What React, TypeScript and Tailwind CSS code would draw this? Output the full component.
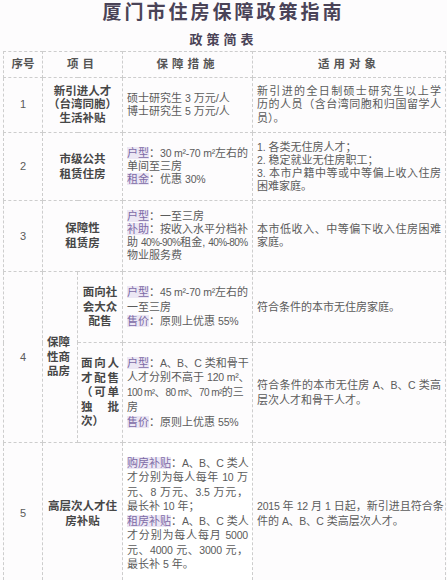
import React from "react";

const font = {
  fontFamily: '"Liberation Sans", "Noto Sans CJK SC", sans-serif',
};

function Tag({ children }: { children: React.ReactNode }) {
  return <span className="bg-[#ece7f4] text-[#7c6aa6]">{children}</span>;
}

// narrow latin / digits, as in the picture
function N({ children, tight }: { children: React.ReactNode; tight?: boolean }) {
  return (
    <span className={tight ? "text-[10px] tracking-[-0.6px]" : "text-[10.5px] tracking-[-0.2px]"}>
      {children}
    </span>
  );
}

// one line per entry; justified lines spread to full width
function Lines({ lines, justify = [], className = "" }: { lines: React.ReactNode[]; justify?: number[]; className?: string }) {
  return (
    <div className={className}>
      {lines.map((l, i) => (
        <div
          key={i}
          className={justify.includes(i) ? "[text-align-last:justify] whitespace-nowrap" : "whitespace-nowrap"}
        >
          {l}
        </div>
      ))}
    </div>
  );
}

const td = "border border-dashed border-[#cdcdcd] align-middle";
const head = "font-bold text-[11.5px] text-[#474747]";

export default function App() {
  return (
    <div className="w-[447px] h-[580px] overflow-hidden bg-[#fdfcfd] text-[#5b5b5b]" style={font}>
      <h1 className="pt-[2px] text-center text-[19px] leading-[22px] font-bold tracking-[3px] text-[#4a4357]">
        厦门市住房保障政策指南
      </h1>
      <h2 className="mt-[8px] text-center text-[13px] leading-[16px] font-bold tracking-[4px] text-[#4a4357]">
        政策简表
      </h2>
      <table className="mt-[3px] ml-[3px] w-[442px] table-fixed border-collapse text-[11px]">
        <colgroup>
          <col className="w-[39px]" />
          <col className="w-[35px]" />
          <col className="w-[45px]" />
          <col className="w-[130px]" />
          <col className="w-[193px]" />
        </colgroup>
        <tbody>
          <tr className="h-[26px] font-bold text-[11.5px] text-[#555]">
            <td className={td + " text-center"}>序号</td>
            <td colSpan={2} className={td + " text-center tracking-[4px]"}>项目</td>
            <td className={td + " text-center tracking-[4px]"}>保障措施</td>
            <td className={td + " text-center tracking-[4px]"}>适用对象</td>
          </tr>

          <tr className="h-[55px] leading-[13.5px]">
            <td className={td + " text-center"}>1</td>
            <td colSpan={2} className={td + " text-center " + head}>
              新引进人才<br />（台湾同胞）<br />生活补贴
            </td>
            <td className={td + " px-[4px]"}>
              <Lines lines={[<>硕士研究生 <N>3</N> 万元/人</>, <>博士研究生 <N>5</N> 万元/人</>]} />
            </td>
            <td className={td + " px-[4px]"}>
              <Lines
                lines={["新引进的全日制硕士研究生以上学", "历的人员（含台湾同胞和归国留学人", "员）。"]}
                justify={[0, 1]}
              />
            </td>
          </tr>

          <tr className="h-[68px] leading-[13px]">
            <td className={td + " text-center"}>2</td>
            <td colSpan={2} className={td + " text-center leading-[15px] " + head}>
              市级公共<br />租赁住房
            </td>
            <td className={td + " px-[4px]"}>
              <Lines
                lines={[
                  <><Tag>户型</Tag>：<N>30 m²-70 m²</N>左右的</>,
                  "单间至三房",
                  <><Tag>租金</Tag>：优惠 <N>30%</N></>,
                ]}
              />
            </td>
            <td className={td + " px-[4px]"}>
              <Lines
                lines={[<><N>1.</N> 各类无住房人才；</>, <><N>2.</N> 稳定就业无住房职工；</>, <><N>3.</N> 本市户籍中等或中等偏上收入住房</>, "困难家庭。"]}
                justify={[2]}
              />
            </td>
          </tr>

          <tr className="h-[71px] leading-[13px]">
            <td className={td + " text-center"}>3</td>
            <td colSpan={2} className={td + " text-center leading-[15px] " + head}>
              保障性<br />租赁房
            </td>
            <td className={td + " px-[4px]"}>
              <Lines
                lines={[
                  <><Tag>户型</Tag>：一至三房</>,
                  <><Tag>补助</Tag>：按收入水平分档补</>,
                  <>助 <N tight>40%-90%</N>租金, <N tight>40%-80%</N></>,
                  "物业服务费",
                ]}
                justify={[1]}
              />
            </td>
            <td className={td + " px-[4px]"}>
              <Lines lines={["本市低收入、中等偏下收入住房困难", "家庭。"]} justify={[0]} />
            </td>
          </tr>

          <tr className="h-[71px] leading-[14.5px]">
            <td rowSpan={2} className={td + " text-center"}>4</td>
            <td rowSpan={2} className={td + " pl-[4px] " + head}>
              保障<br />性商<br />品房
            </td>
            <td className={td + " px-[3px] text-center " + head}>
              面向社<br />会大众<br />配售
            </td>
            <td className={td + " px-[4px]"}>
              <Lines
                lines={[
                  <><Tag>户型</Tag>：<N>45 m²-70 m²</N>左右的</>,
                  "一至三房",
                  <><Tag>售价</Tag>：原则上优惠 <N>55%</N></>,
                ]}
              />
            </td>
            <td className={td + " px-[4px]"}>符合条件的本市无住房家庭。</td>
          </tr>

          <tr className="h-[100px] leading-[14.5px]">
            <td className={td + " px-[3px] " + head}>
              <Lines lines={["面向人", "才配售", "（可单", "独批", "次）"]} justify={[0, 1, 2, 3]} />
            </td>
            <td className={td + " px-[4px]"}>
              <Lines
                lines={[
                  <><Tag>户型</Tag>：<N>A、B、C</N> 类和骨干</>,
                  <>人才分别不高于 <N>120 m²</N>、</>,
                  <><N tight>100 m²</N>、<N tight>80 m²</N>、<N tight>70 m²</N>的三</>,
                  "房",
                  <><Tag>售价</Tag>：原则上优惠 <N>55%</N></>,
                ]}
              />
            </td>
            <td className={td + " px-[4px]"}>
              <Lines lines={[<>符合条件的本市无住房 <N>A、B、C</N> 类高</>, "层次人才和骨干人才。"]} justify={[0]} />
            </td>
          </tr>

          <tr className="h-[142px] leading-[14.5px]">
            <td className={td + " text-center"}>5</td>
            <td colSpan={2} className={td + " text-center leading-[15px] " + head}>
              高层次人才住<br />房补贴
            </td>
            <td className={td + " px-[4px] bg-white"}>
              <Lines
                lines={[
                  <><Tag>购房补贴</Tag>：<N>A、B、C</N> 类人</>,
                  <>才分别为每人每年 <N>10</N> 万</>,
                  <>元、<N>8</N> 万元、<N>3.5</N> 万元，</>,
                  <>最长补 <N>10</N> 年；</>,
                  <><Tag>租房补贴</Tag>：<N>A、B、C</N> 类人</>,
                  <>才分别为每人每月 <N>5000</N></>,
                  <>元、<N>4000</N> 元、<N>3000</N> 元，</>,
                  <>最长补 <N>5</N> 年。</>,
                ]}
                justify={[0, 1, 2, 4, 5, 6]}
              />
            </td>
            <td className={td + " px-[4px]"}>
              <Lines lines={[<><N>2015</N> 年 <N>12</N> 月 <N>1</N> 日起，新引进且符合条</>, <>件的 <N>A、B、C</N> 类高层次人才。</>]} justify={[0]} />
            </td>
          </tr>
        </tbody>
      </table>
    </div>
  );
}
